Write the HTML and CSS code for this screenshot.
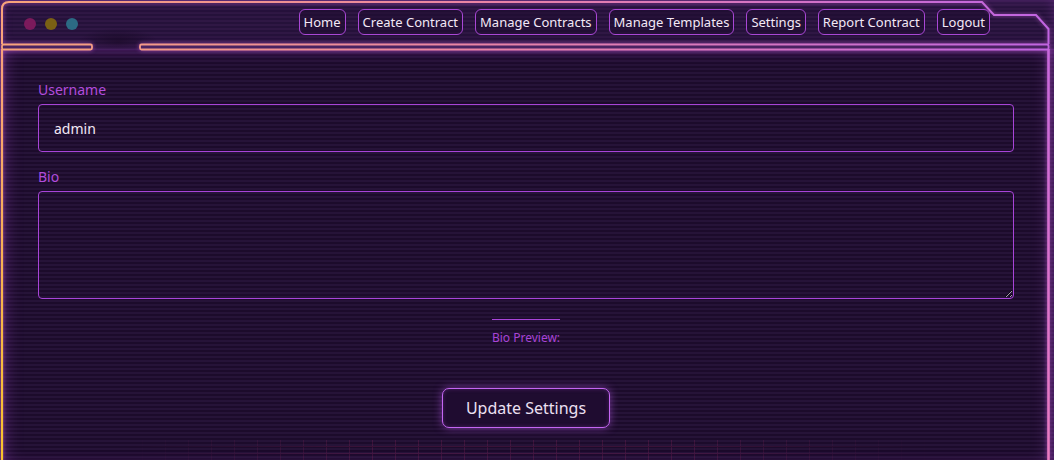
FILE: index.html
```html
<!DOCTYPE html>
<html lang="en">
<head>
<meta charset="utf-8">
<title>Settings</title>
<link rel="stylesheet" href="styles.css">
</head>
<body>
<div class="window">
  <header class="titlebar">
    <div class="dots">
      <span class="dot dot-red"></span>
      <span class="dot dot-yellow"></span>
      <span class="dot dot-teal"></span>
    </div>
    <nav class="nav">
      <a class="nav-btn" href="#">Home</a>
      <a class="nav-btn" href="#">Create Contract</a>
      <a class="nav-btn" href="#">Manage Contracts</a>
      <a class="nav-btn" href="#">Manage Templates</a>
      <a class="nav-btn" href="#">Settings</a>
      <a class="nav-btn" href="#">Report Contract</a>
      <a class="nav-btn" href="#">Logout</a>
    </nav>
  </header>
  <main class="content">
    <form class="settings-form">
      <label class="field-label" for="username">Username</label>
      <input class="field-input" id="username" type="text" value="admin">
      <label class="field-label field-label-bio" for="bio">Bio</label>
      <textarea class="field-textarea" id="bio"></textarea>
      <div class="preview">
        <div class="preview-title">Bio Preview:</div>
      </div>
      <div class="actions">
        <button class="submit-btn" type="button">Update Settings</button>
      </div>
    </form>
    <div class="grid-floor"></div>
  </main>
  <svg class="frame" width="1054" height="460" viewBox="0 0 1054 460">
    <defs>
      <linearGradient id="gTop" gradientUnits="userSpaceOnUse" x1="0" y1="0" x2="1054" y2="0">
        <stop offset="0" stop-color="#f8a47a"/>
        <stop offset="0.45" stop-color="#ea84a4"/>
        <stop offset="1" stop-color="#c064e2"/>
      </linearGradient>
      <linearGradient id="gLeft" gradientUnits="userSpaceOnUse" x1="0" y1="50" x2="0" y2="460">
        <stop offset="0" stop-color="#f8a07c"/>
        <stop offset="1" stop-color="#fac42c"/>
      </linearGradient>
      <linearGradient id="gRight" gradientUnits="userSpaceOnUse" x1="0" y1="50" x2="0" y2="460">
        <stop offset="0" stop-color="#c868dc"/>
        <stop offset="1" stop-color="#ea7cc0"/>
      </linearGradient>
    </defs>
    <path d="M2,44 L2,9 Q2,2 9,2 L982,2 L994,15 L1036,15 L1048.5,29 L1048.5,44" fill="none" stroke="url(#gTop)" stroke-width="2"/>
    <rect x="2" y="44.5" width="90" height="5" rx="1.5" fill="#4a2262" stroke="url(#gTop)" stroke-width="1.8"/>
    <rect x="140" y="44.5" width="908.5" height="5" rx="1.5" fill="#4a2262" stroke="url(#gTop)" stroke-width="1.8"/>
    <line x1="2" y1="49" x2="2" y2="460" stroke="url(#gLeft)" stroke-width="2.2"/>
    <line x1="1048.5" y1="49" x2="1048.5" y2="460" stroke="url(#gRight)" stroke-width="2.6"/>
  </svg>
</div>
</body>
</html>
```
FILE: styles.css
```css
* {
  box-sizing: border-box;
}

html, body {
  margin: 0;
  padding: 0;
}

body {
  width: 1054px;
  height: 460px;
  overflow: hidden;
  background: #1e0d2e;
  font-family: "Noto Sans", "Open Sans", sans-serif;
  color: #efe2f4;
}

.window {
  position: relative;
  width: 1054px;
  height: 460px;
  display: flex;
  flex-direction: column;
  background: repeating-linear-gradient(to bottom, #261338 0, #261338 2px, #1c0b2b 2px, #1c0b2b 4px);
}

.titlebar {
  height: 49px;
  flex: none;
  display: flex;
  align-items: flex-start;
  background:
    radial-gradient(ellipse 40px 14px at 118px 42px, rgba(18, 6, 28, 0.6), rgba(18, 6, 28, 0)),
    repeating-linear-gradient(to bottom, #2f1744 0, #2f1744 2px, #25113a 2px, #25113a 4px);
  box-shadow: inset 0 0 12px rgba(160, 70, 200, 0.35);
}

.dots {
  display: flex;
  gap: 9px;
  padding: 18px 0 0 24px;
}

.dot {
  width: 12px;
  height: 12px;
  border-radius: 50%;
}

.dot-red { background: #7c1a5c; }
.dot-yellow { background: #7a6014; }
.dot-teal { background: #2c6a84; }

.nav {
  margin-left: auto;
  display: flex;
  gap: 12px;
  padding: 9px 64px 0 0;
}

.nav-btn {
  display: flex;
  align-items: center;
  height: 26px;
  padding: 0 4px;
  border: 1px solid #a947d6;
  border-radius: 6px;
  color: #f3e8f6;
  text-decoration: none;
  font-size: 13px;
  background: rgba(30, 12, 46, 0.5);
}

.content {
  position: relative;
  flex: 1;
  padding: 32px 40px 0 38px;
  box-shadow: inset 14px 0 16px -8px rgba(160, 70, 200, 0.35), inset -14px 0 16px -8px rgba(160, 70, 200, 0.35), inset 0 10px 14px -8px rgba(160, 70, 200, 0.35);
}

.settings-form {
  display: flex;
  flex-direction: column;
}

.field-label {
  font-size: 14px;
  line-height: 17px;
  color: #b24cdc;
  margin-bottom: 6px;
}

.field-label-bio {
  margin-top: 16px;
}

.field-input {
  height: 48px;
  border: 1px solid #a844d8;
  border-radius: 4px;
  background: transparent;
  color: #f3e8f6;
  font-family: "Noto Sans", sans-serif;
  font-size: 14px;
  padding: 0 15px;
  outline: none;
}

.field-textarea {
  height: 108px;
  border: 1px solid #a844d8;
  border-radius: 4px;
  background: transparent;
  color: #f3e8f6;
  font-family: "Noto Sans", sans-serif;
  font-size: 14px;
  padding: 10px 15px;
  outline: none;
  resize: both;
  color-scheme: dark;
}

.preview {
  display: flex;
  justify-content: center;
  margin-top: 20px;
}

.preview-title {
  border-top: 1px solid #a844d8;
  padding-top: 10px;
  font-size: 12px;
  line-height: 16px;
  color: #a944d6;
}

.actions {
  display: flex;
  justify-content: center;
  margin-top: 42px;
}

.submit-btn {
  height: 40px;
  padding: 0 23px;
  border: 1px solid #c466f2;
  border-radius: 7px;
  background: #1f0c30;
  color: #ece0f2;
  font-family: "Noto Sans", sans-serif;
  font-size: 16px;
  box-shadow: 0 0 8px rgba(190, 90, 240, 0.55), inset 0 0 4px rgba(190, 90, 240, 0.25);
}

.grid-floor {
  position: absolute;
  left: 120px;
  right: 120px;
  bottom: 0;
  height: 20px;
  opacity: 0.2;
  background:
    repeating-linear-gradient(to right, transparent 0, transparent 22px, #b0306a 22px, #b0306a 23px),
    repeating-linear-gradient(to bottom, transparent 0, transparent 6px, #b0306a 6px, #b0306a 7px);
  -webkit-mask-image: linear-gradient(to right, transparent, #000 30%, #000 70%, transparent);
  mask-image: linear-gradient(to right, transparent, #000 30%, #000 70%, transparent);
}

.frame {
  position: absolute;
  left: 0;
  top: 0;
  pointer-events: none;
  filter: drop-shadow(0 0 2px rgba(210, 100, 230, 0.6));
}
```
